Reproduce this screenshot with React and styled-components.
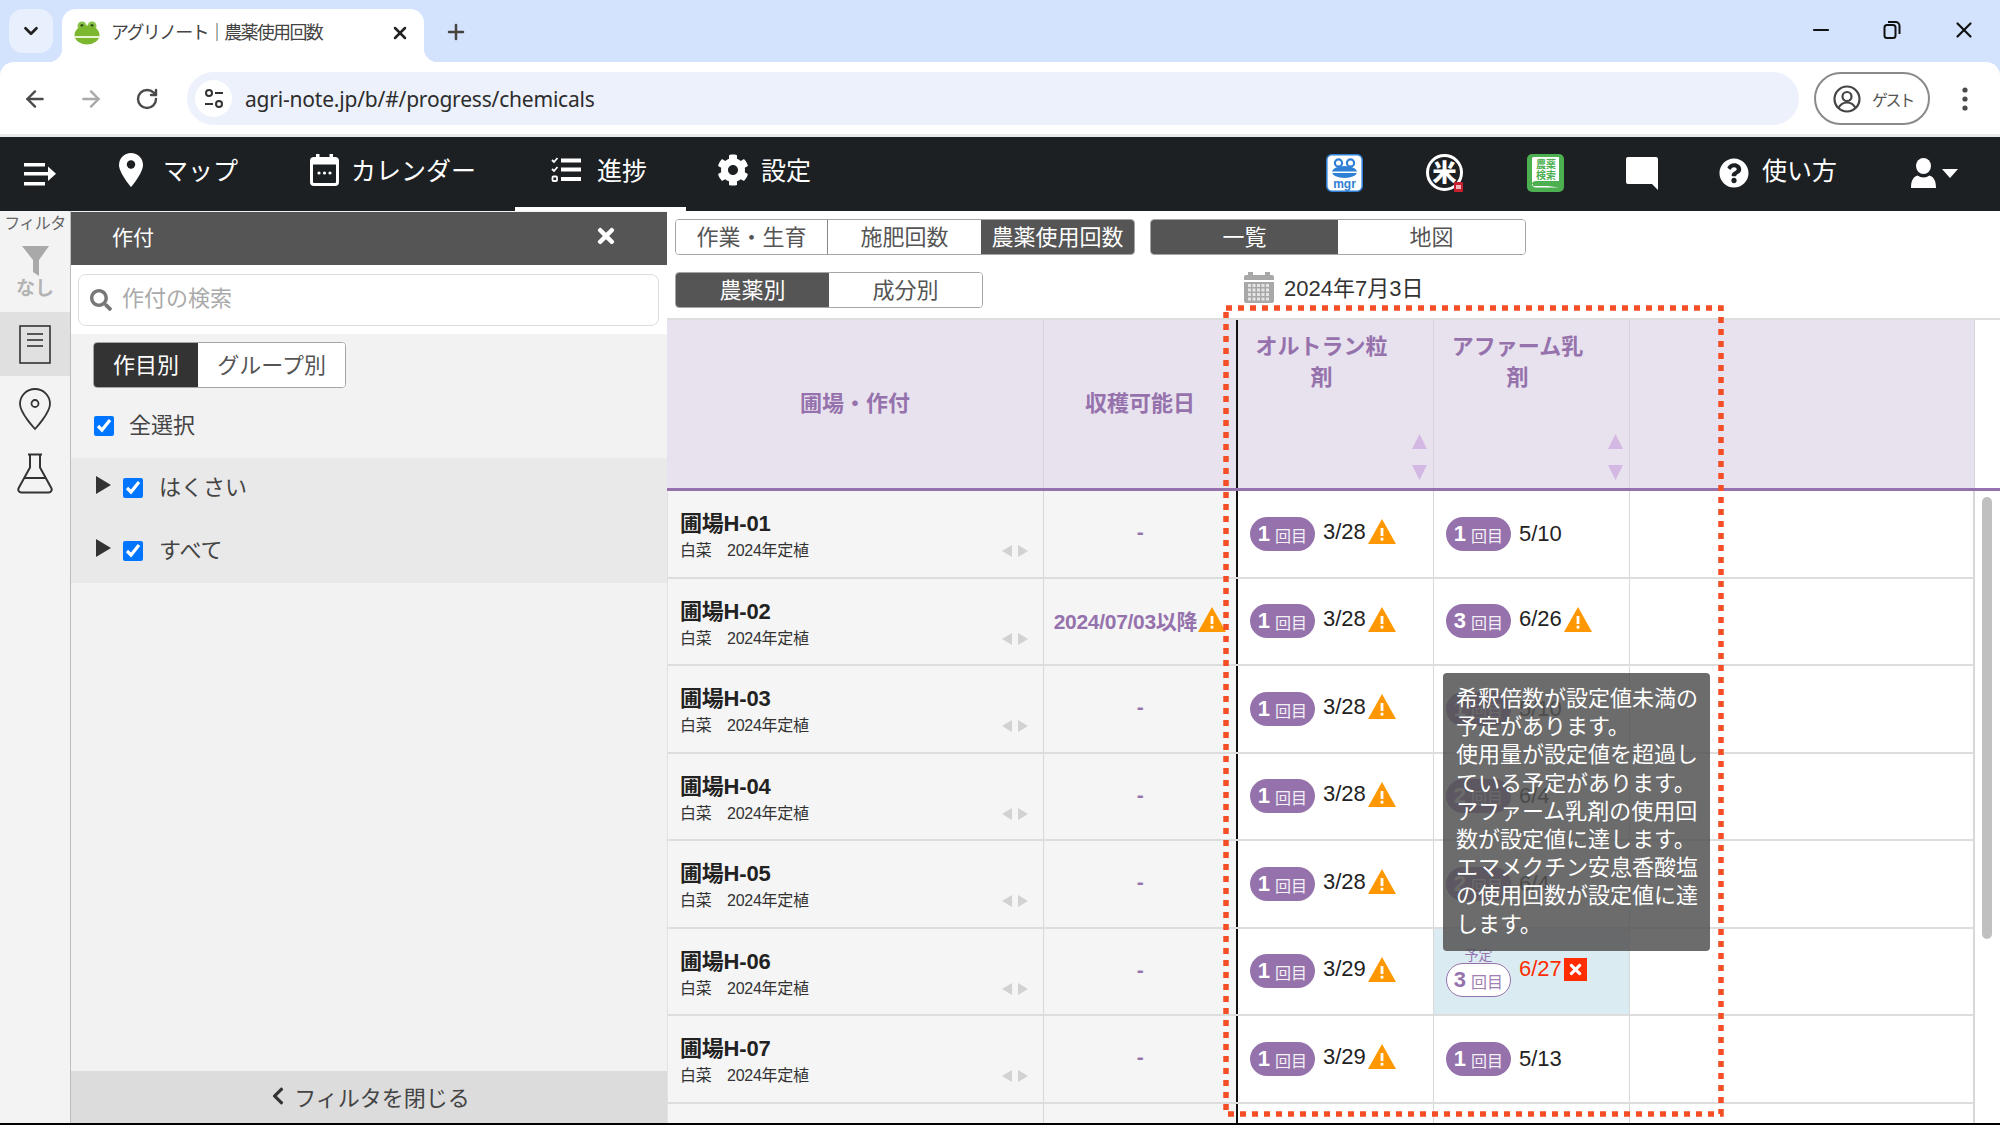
import React from "react";
import styled, { createGlobalStyle } from "styled-components";
import { ArrowLeft, ArrowRight, ChevronDown, Minus, Plus, RotateCw, X } from "lucide-react";
import { FaChevronLeft, FaCog, FaQuestionCircle, FaSearch, FaTimes } from "react-icons/fa";

const GlobalStyle = createGlobalStyle`
  html, body {
    margin: 0;
    padding: 0;
    overflow: hidden;
    background: #000;
    font-family: "Liberation Sans", "Noto Sans CJK JP", sans-serif;
  }
  * {
    box-sizing: border-box;
  }
`;

const COLUMNS = "377px 194px 196px 196px 1fr";
const PURPLE = "#9672ad";

const Page = styled.div`
  width: 2000px;
  height: 1125px;
  display: flex;
  flex-direction: column;
  position: relative;
  overflow: hidden;
  background: #000;
`;

/* browser chrome */
const Chrome = styled.div`
  background: #d3e3fd;
  flex: none;
`;

const TabStrip = styled.div`
  height: 62px;
  display: flex;
  align-items: flex-end;
  padding-left: 9px;
  color: #222;
`;

const TabListButton = styled.div`
  width: 44px;
  height: 44px;
  margin: 0 9px 9px 0;
  border-radius: 14px;
  background: #e8f0fe;
  display: flex;
  align-items: center;
  justify-content: center;
`;

const Tab = styled.div`
  width: 362px;
  height: 53px;
  background: #fff;
  border-radius: 14px 14px 0 0;
  display: flex;
  align-items: center;
  padding: 0 14px 6px 12px;
  position: relative;

  &::before,
  &::after {
    content: "";
    position: absolute;
    bottom: 0;
    width: 14px;
    height: 14px;
  }
  &::before {
    left: -14px;
    background: radial-gradient(circle at 0 0, transparent 14px, #fff 14.5px);
  }
  &::after {
    right: -14px;
    background: radial-gradient(circle at 100% 0, transparent 14px, #fff 14.5px);
  }
`;

const TabTitle = styled.span`
  font-size: 18px;
  color: #444;
  margin-left: 11px;
  flex: 1;
  white-space: nowrap;
  letter-spacing: -1.7px;
  padding-bottom: 3px;
`;

const NewTab = styled.div`
  margin: 0 0 18px 20px;
  display: flex;
`;

const WindowControls = styled.div`
  margin-left: auto;
  display: flex;
  align-items: center;
  align-self: flex-start;
  padding-top: 17px;
  padding-right: 23px;
  gap: 50px;
  color: #111;
`;

const BrowserBar = styled.div`
  height: 75px;
  background: #fff;
  border-radius: 14px 14px 0 0;
  border-bottom: 3px solid #e9e9e9;
  display: flex;
  align-items: flex-start;
  padding: 10px 0 0 7px;
`;

const NavButton = styled.div`
  width: 56px;
  height: 53px;
  display: flex;
  align-items: center;
  justify-content: center;
  color: ${(p) => (p.$disabled ? "#a9a9a9" : "#4a4a4a")};
`;

const AddressBar = styled.div`
  width: 1612px;
  height: 53px;
  margin-left: 12px;
  border-radius: 27px;
  background: #ecf1fb;
  display: flex;
  align-items: center;
  padding-left: 8px;
`;

const SiteButton = styled.div`
  width: 37px;
  height: 37px;
  border-radius: 50%;
  background: #fff;
  display: flex;
  align-items: center;
  justify-content: center;
`;

const Url = styled.span`
  font-family: "Noto Sans", sans-serif;
  font-size: 21px;
  color: #2c2c2c;
  margin-left: 13px;
  letter-spacing: -0.2px;
`;

const GuestButton = styled.div`
  width: 116px;
  height: 53px;
  margin-left: 15px;
  border: 2px solid #8a8a8a;
  border-radius: 27px;
  display: flex;
  align-items: center;
  padding-left: 17px;
  gap: 11px;
  font-size: 16px;
  letter-spacing: -2.4px;
  color: #555;
`;

const Kebab = styled.div`
  margin-left: 25px;
  width: 20px;
  height: 53px;
  display: flex;
  align-items: center;
  justify-content: center;
`;

/* app header */
const AppHeader = styled.header`
  height: 74px;
  flex: none;
  background: #1c2023;
  display: flex;
  align-items: stretch;
  color: #fff;
  padding-left: 24px;
  font-size: 25px;
`;

const MenuToggle = styled.div`
  display: flex;
  align-items: center;
  margin-right: 27px;
`;

const NavItem = styled.div`
  display: flex;
  align-items: center;
  padding: 0 ${(p) => (p.$active ? 39 : 36)}px 4px 36px;
  gap: ${(p) => p.$gap || 16}px;
  margin-left: ${(p) => p.$shift || 0}px;
  white-space: nowrap;
  border-bottom: 4px solid ${(p) => (p.$active ? "#fff" : "transparent")};

  & > span {
    padding-bottom: 2px;
  }
`;

const HeaderRight = styled.div`
  margin-left: auto;
  display: flex;
  align-items: center;
  gap: 63px;
  padding-right: 42px;
  padding-bottom: 2px;
`;

const HelpLink = styled.div`
  display: flex;
  align-items: center;
  gap: 13px;
  margin-left: -2px;
  margin-right: 11px;

  & > span {
    padding-bottom: 8px;
  }
`;

const UserMenu = styled.div`
  display: flex;
  align-items: center;
  gap: 6px;
`;

/* main area */
const Main = styled.div`
  height: 912px;
  flex: none;
  display: flex;
  background: #fff;
`;

const Rail = styled.aside`
  width: 71px;
  flex: none;
  background: #f3f3f3;
  border-right: 1px solid #bdbdbd;
  display: flex;
  flex-direction: column;
  align-items: stretch;
`;

const RailLabel = styled.div`
  font-size: 16px;
  line-height: 26px;
  color: #666;
  text-align: center;
  height: 35px;
  white-space: nowrap;
  letter-spacing: -0.5px;
`;

const RailFilter = styled.div`
  height: 66px;
  display: flex;
  flex-direction: column;
  align-items: center;
  color: #b4b4b4;
  font-size: 19px;
  line-height: 26px;
  font-weight: bold;
`;

const RailItem = styled.div`
  height: ${(p) => p.$h}px;
  display: flex;
  align-items: center;
  justify-content: center;
  padding-bottom: ${(p) => p.$lift || 0}px;
  background: ${(p) => (p.$active ? "#e0e0e0" : "transparent")};
`;

const FilterPanel = styled.section`
  width: 596px;
  flex: none;
  display: flex;
  flex-direction: column;
  background: #f2f2f2;
`;

const PanelHeader = styled.div`
  height: 53px;
  margin-top: 1px;
  background: #555;
  color: #fff;
  font-size: 21px;
  display: flex;
  align-items: center;
  justify-content: space-between;
  padding: 0 49px 5px 41px;
`;

const SearchArea = styled.div`
  height: 69px;
  background: #fff;
  padding: 9px 8px 8px 7px;
`;

const SearchBox = styled.div`
  height: 52px;
  border: 1.5px solid #ddd;
  border-radius: 8px;
  display: flex;
  align-items: center;
  padding-left: 11px;
  gap: 10px;
  font-size: 22px;
  color: #aaa;

  & > span {
    padding-bottom: 9px;
  }
`;

const PanelToggle = styled.div`
  margin: 8px 0 0 22px;
`;

const SelectAll = styled.label`
  display: flex;
  align-items: center;
  height: 70px;
  padding: 0 0 1px 23px;
  gap: 15px;
  font-size: 22px;
  color: #444;
`;

const CheckBox = styled.input.attrs({ type: "checkbox", readOnly: true })`
  width: 20px;
  height: 20px;
  margin: 6px 0 0;
  accent-color: #0075ff;
`;

const CropGroup = styled.div`
  background: #e9e9e9;
`;

const CropRow = styled.div`
  height: 62.5px;
  display: flex;
  align-items: center;
  padding: 0 0 8px 25px;
  font-size: 22px;
  color: #444;
`;

const Caret = styled.span`
  width: 0;
  height: 0;
  border-left: 15px solid #333;
  border-top: 9px solid transparent;
  border-bottom: 9px solid transparent;
  margin-right: 12px;
`;

const CropName = styled.span`
  margin-left: 16px;
`;

const PanelFooter = styled.div`
  margin-top: auto;
  height: 52px;
  background: #dcdcdc;
  display: flex;
  align-items: center;
  justify-content: center;
  gap: 6px;
  font-size: 22px;
  color: #444;
  padding-bottom: 2px;
`;

const Content = styled.main`
  flex: 1;
  min-width: 0;
  display: flex;
  flex-direction: column;
`;

const Controls = styled.div`
  height: 107px;
  flex: none;
  padding: 8px 0 0 8px;
`;

const ControlRow = styled.div`
  height: 36px;
  display: flex;
  align-items: center;
  margin-bottom: 17px;
`;

const SegGroup = styled.div`
  display: flex;
  height: ${(p) => p.$h || 36}px;
  border: 1.5px solid #a5a5a5;
  border-radius: 4px;
  overflow: hidden;
  margin-left: ${(p) => p.$ml || 0}px;
  background: #fff;
`;

const Seg = styled.div`
  width: ${(p) => p.$w}px;
  display: flex;
  align-items: center;
  justify-content: center;
  font-size: 22px;
  white-space: nowrap;
  padding-bottom: 4px;
  background: ${(p) => (p.$active ? p.$dark || "#555" : "#fff")};
  color: ${(p) => (p.$active ? "#fff" : "#555")};
  border-right: ${(p) => (p.$line ? "1px solid #888" : "none")};
`;

const DateLabel = styled.div`
  height: 36px;
  display: flex;
  align-items: center;
  gap: 10px;
  margin-left: 261px;
  padding-bottom: 6px;
  font-size: 22px;
  color: #333;

  & > span {
    padding-bottom: 3px;
  }
`;

const Table = styled.div`
  flex: 1;
  min-height: 0;
  position: relative;
  overflow: hidden;
  border-top: 2px solid #dedede;
  padding-right: 25px;
`;

const HeadRow = styled.div`
  height: 171px;
  display: grid;
  grid-template-columns: ${COLUMNS};
  background: #e8e2ee;
  border-bottom: 3px solid ${PURPLE};
  margin-right: -25px;
  padding-right: 25px;
  background-clip: content-box;
  color: ${PURPLE};
  font-size: 22px;
  font-weight: bold;
`;

const HeadCell = styled.div`
  display: flex;
  align-items: center;
  justify-content: center;
  border-right: ${(p) => (p.$fixed ? "2px solid #111" : "1px solid #d6d3da")};
  padding-bottom: 7px;
`;

const DrugHead = styled.div`
  display: flex;
  border-right: 1px solid #d6d3da;
`;

const DrugName = styled.div`
  flex: 1;
  text-align: center;
  line-height: 31px;
  padding-top: 11px;
`;

const SortArrows = styled.div`
  width: 28px;
  padding: 0 6px 8px 7px;
  display: flex;
  flex-direction: column;
  justify-content: flex-end;
  gap: 16px;
`;

const Row = styled.div`
  height: 87.5px;
  display: grid;
  grid-template-columns: ${COLUMNS};
  border-bottom: 2px solid #ddd;
  border-right: 1px solid #d8d8d8;
`;

const FieldCell = styled.div`
  background: #f5f5f5;
  border-right: 1px solid #d8d8d8;
  padding: 19px 15px 0 12px;
  border-left: 1px solid #e2e2e2;
`;

const FieldName = styled.div`
  font-size: 22px;
  font-weight: bold;
  line-height: 28px;
  color: #222;
  letter-spacing: -0.2px;
`;

const FieldSub = styled.div`
  display: flex;
  align-items: center;
  justify-content: space-between;
  font-size: 16px;
  color: #333;
  line-height: 26px;
  letter-spacing: -0.3px;
`;

const SubArrows = styled.div`
  display: flex;
  gap: 6px;
`;

const HarvestCell = styled.div`
  background: #f5f5f5;
  border-right: 2px solid #111;
  display: flex;
  align-items: center;
  justify-content: center;
  gap: 1px;
  padding-bottom: 3px;
  color: ${PURPLE};
  font-size: 21px;
  font-weight: bold;
  white-space: nowrap;
  letter-spacing: -0.3px;
`;

const UseCell = styled.div`
  display: flex;
  align-items: center;
  padding-left: 12px;
  border-right: 1px solid #d8d8d8;
  background: ${(p) => (p.$planned ? "#daecf2" : "transparent")};
`;

const Badge = styled.div`
  width: 65px;
  height: 34px;
  flex: none;
  border-radius: 17px;
  display: flex;
  align-items: center;
  justify-content: center;
  gap: 5px;
  background: ${(p) => (p.$planned ? "#fff" : PURPLE)};
  border: ${(p) => (p.$planned ? `1.5px solid ${PURPLE}` : "none")};
  color: ${(p) => (p.$planned ? PURPLE : "#fff")};
`;

const BadgeCount = styled.span`
  font-size: 22px;
  font-weight: bold;
`;

const BadgeUnit = styled.span`
  font-size: 16px;
  margin-top: 2px;
  opacity: 0.9;
`;

const Planned = styled.div`
  display: flex;
  flex-direction: column;
  align-items: center;
  margin-top: 2px;
`;

const PlannedLabel = styled.div`
  font-size: 14px;
  line-height: 16px;
  color: ${PURPLE};
`;

const UseDate = styled.span`
  font-size: 22px;
  color: ${(p) => (p.$error ? "#ff2d00" : "#222")};
  margin: 0 2px ${(p) => (p.$flat ? 0 : 4)}px 8px;
`;

const ErrorMark = styled.span`
  width: 23px;
  height: 23px;
  margin-bottom: 4px;
  background: #ff2d00;
  color: #fff;
  display: flex;
  align-items: center;
  justify-content: center;
`;

const Tooltip = styled.div`
  position: absolute;
  left: 776px;
  top: 353px;
  width: 267px;
  height: 278px;
  padding: 12px 0 0 13px;
  background: rgba(82, 82, 82, 0.85);
  border-radius: 4px;
  color: #fff;
  font-size: 22px;
  line-height: 28.2px;
  white-space: nowrap;
`;

const TooltipLine = styled.div`
  display: block;
`;

const ScrollThumb = styled.div`
  position: absolute;
  left: 1315px;
  top: 177px;
  width: 10px;
  height: 442px;
  border-radius: 5px;
  background: #c0c0c0;
`;

const Annotation = styled.svg`
  position: absolute;
  left: 1223px;
  top: 305px;
  pointer-events: none;
`;

const WarnInline = styled.span`
  display: flex;
  margin-bottom: 4px;
`;

const FrogIcon = () => (
  <svg width="26" height="26" viewBox="0 0 26 26">
    <circle cx="8" cy="6" r="4.500" fill="#8bc34a" />
    <circle cx="18" cy="6" r="4.500" fill="#8bc34a" />
    <circle cx="8" cy="5.500" r="1.600" fill="#2d4d16" />
    <circle cx="18" cy="5.500" r="1.600" fill="#2d4d16" />
    <ellipse cx="13" cy="15" rx="12.500" ry="9.500" fill="#7cb82f" />
    <rect x="0" y="16" width="26" height="2" fill="#e8f3d6" />
  </svg>
);

const RestoreIcon = () => (
  <svg width="18" height="20" viewBox="0 0 18 20" fill="none" stroke="#111" strokeWidth="2">
    <rect x="1.500" y="5" width="11" height="13" rx="2.500" />
    <path d="M5 2h7.500a4 4 0 0 1 4 4v8" />
  </svg>
);

const SiteIcon = () => (
  <svg width="20" height="22" viewBox="0 0 20 22" fill="none" stroke="#333" strokeWidth="2">
    <circle cx="5" cy="5" r="3" />
    <path d="M11 5h8" />
    <path d="M1 16h8" />
    <circle cx="15" cy="16" r="3" />
  </svg>
);

const GuestIcon = () => (
  <svg width="28" height="28" viewBox="0 0 28 28" fill="none" stroke="#444" strokeWidth="2.200">
    <circle cx="14" cy="14" r="12.500" />
    <circle cx="14" cy="11.500" r="4.500" />
    <path d="M5.500 23c2-4 5-5.500 8.500-5.500s6.500 1.500 8.500 5.500" />
  </svg>
);

const DotsIcon = () => (
  <svg width="6" height="26" viewBox="0 0 6 26" fill="#4a4a4a">
    <circle cx="3" cy="4" r="2.600" />
    <circle cx="3" cy="13" r="2.600" />
    <circle cx="3" cy="22" r="2.600" />
  </svg>
);

const MenuIcon = () => (
  <svg width="32" height="24" viewBox="0 0 32 24" fill="#fff">
    <rect x="0" y="1" width="21" height="3.500" />
    <rect x="0" y="10" width="25" height="3.500" />
    <path d="M24 4.500l8 7.200-8 7.300z" />
    <rect x="0" y="20" width="21" height="3.500" />
  </svg>
);

const PinIcon = () => (
  <svg width="24" height="34" viewBox="0 0 24 34">
    <path d="M12 0C5.400 0 0 5.300 0 12c0 8 12 22 12 22s12-14 12-22C24 5.300 18.600 0 12 0z" fill="#fff" />
    <circle cx="12" cy="11.500" r="4.200" fill="#1c2023" />
  </svg>
);

const CalendarIcon = () => (
  <svg width="29" height="32" viewBox="0 0 29 32" fill="none">
    <rect x="1.500" y="4.500" width="26" height="26" rx="2.500" stroke="#fff" strokeWidth="3" />
    <rect x="1.500" y="4.500" width="26" height="6" fill="#fff" />
    <rect x="6" y="0" width="3.500" height="7" fill="#fff" />
    <rect x="19.500" y="0" width="3.500" height="7" fill="#fff" />
    <circle cx="9" cy="19" r="1.600" fill="#fff" />
    <circle cx="14.500" cy="19" r="1.600" fill="#fff" />
    <circle cx="20" cy="19" r="1.600" fill="#fff" />
  </svg>
);

const ChecklistIcon = () => (
  <svg width="30" height="26" viewBox="0 0 30 26" fill="none" stroke="#fff">
    <path d="M1 3l2 2 3.500-4M1 12l2 2 3.500-4" strokeWidth="1.800" />
    <rect x="1.500" y="19.500" width="4.500" height="4.500" rx="1" strokeWidth="1.800" />
    <path d="M10 3.500h20M10 12.500h20M10 22h20" strokeWidth="4" />
  </svg>
);

const MgrLogo = () => (
  <svg width="37" height="38" viewBox="0 0 37 38">
    <rect x="0.800" y="0.800" width="35.400" height="36.400" rx="5" fill="#fff" stroke="#2f7fd6" strokeWidth="1.600" />
    <circle cx="12.500" cy="9" r="3.600" fill="none" stroke="#2f7fd6" strokeWidth="2.200" />
    <circle cx="24.500" cy="9" r="3.600" fill="none" stroke="#2f7fd6" strokeWidth="2.200" />
    <ellipse cx="18.500" cy="18" rx="12.500" ry="6" fill="#2f7fd6" />
    <rect x="5.500" y="17.500" width="26" height="1.500" fill="#fff" />
    <text x="18.500" y="33.500" fontSize="12" fontWeight="bold" fill="#2f7fd6" textAnchor="middle" fontFamily="Liberation Sans, sans-serif">mgr</text>
  </svg>
);

const RiceLogo = () => (
  <svg width="38" height="38" viewBox="0 0 38 38">
    <circle cx="18.500" cy="18.500" r="17" fill="none" stroke="#fff" strokeWidth="3" />
    <text x="18.500" y="27" fontSize="24" fontWeight="900" fill="#fff" textAnchor="middle" fontFamily="Noto Sans CJK JP, sans-serif">米</text>
    <rect x="28" y="28" width="9" height="10" rx="1" fill="#c8202f" />
    <rect x="30" y="31" width="5" height="4" fill="#f2b5ba" />
  </svg>
);

const BookLogo = () => (
  <svg width="37" height="38" viewBox="0 0 37 38">
    <rect width="37" height="38" rx="5" fill="#4caf50" />
    <path d="M5 30V4.500a1.500 1.500 0 0 1 1.500-1.500H32v24H9c-2.200 0-4 1.200-4 3 0 2 1.800 3.500 4 3.500h23" fill="#fff" />
    <rect x="6" y="29" width="27" height="3" fill="#4caf50" />
    <text x="19" y="14" fontSize="10" fontWeight="bold" fill="#4caf50" textAnchor="middle" fontFamily="Noto Sans CJK JP, sans-serif">農薬</text>
    <text x="19" y="25" fontSize="10" fontWeight="bold" fill="#4caf50" textAnchor="middle" fontFamily="Noto Sans CJK JP, sans-serif">検索</text>
  </svg>
);

const ChatIcon = () => (
  <svg width="32" height="33" viewBox="0 0 32 33" style={{ marginLeft: -1 }}>
    <path d="M2 0h28a2 2 0 0 1 2 2v31l-6-6H2a2 2 0 0 1-2-2V2a2 2 0 0 1 2-2z" fill="#fff" />
  </svg>
);

const UserIcon = () => (
  <svg width="25" height="30" viewBox="0 0 25 30" fill="#fff">
    <ellipse cx="12.500" cy="8" rx="7.500" ry="8" />
    <path d="M0 30c0-7 2-11 6.500-12.500 3.500 2.500 8.500 2.500 12 0C23 19 25 23 25 30z" />
  </svg>
);

const UserCaret = () => (
  <svg width="16" height="9" viewBox="0 0 16 9" fill="#fff">
    <path d="M0 0h16l-8 9z" />
  </svg>
);

const FunnelIcon = () => (
  <svg width="27" height="30" viewBox="0 0 27 30" fill="#a9a9a9">
    <path d="M0 0h27L17 14v16l-6-4V14z" />
  </svg>
);

const DocIcon = () => (
  <svg width="32" height="39" viewBox="0 0 32 39" fill="none" stroke="#333" strokeWidth="1.600">
    <rect x="1" y="1" width="30" height="37" />
    <path d="M8 9h16M8 15h16M8 21h16" stroke="#555" strokeWidth="2" />
  </svg>
);

const PinOutline = () => (
  <svg width="32" height="42" viewBox="0 0 32 42" fill="none" stroke="#333" strokeWidth="1.800">
    <path d="M16 1C7.700 1 1 7.500 1 16c0 9 15 25 15 25s15-16 15-25C31 7.500 24.300 1 16 1z" />
    <circle cx="16" cy="15.500" r="3.500" />
  </svg>
);

const FlaskIcon = () => (
  <svg width="36" height="41" viewBox="0 0 36 41" fill="none" stroke="#333" strokeWidth="2">
    <path d="M11 1.500h14M13 1.500v13L1.700 35a3 3 0 0 0 2.800 4.500h27a3 3 0 0 0 2.800-4.500L23 14.500v-13" />
    <path d="M7.500 25h21" />
  </svg>
);

const GrayCalendar = () => (
  <svg width="30" height="31" viewBox="0 0 30 31">
    <rect y="3" width="30" height="28" rx="2" fill="#a8a8a8" />
    <rect x="4" y="0" width="5" height="6" fill="#a8a8a8" />
    <rect x="21" y="0" width="5" height="6" fill="#a8a8a8" />
    <rect y="8" width="30" height="2" fill="#fff" />
    {[12, 16.5, 21, 25.5].map((y) =>
      [4, 8.5, 13, 17.5, 22].map((x) => (
        <rect key={`${x}-${y}`} x={x} y={y} width="3" height="3" fill="#e4e4e4" />
      ))
    )}
  </svg>
);

const SortArrow = ({ down }) => (
  <svg width="15" height="15" viewBox="0 0 15 15" fill="#d4b8e4">
    <path d={down ? "M0 0h15L7.500 15z" : "M0 15h15L7.500 0z"} />
  </svg>
);

const SideArrow = ({ right }) => (
  <svg width="10" height="12" viewBox="0 0 10 12" fill="#d2d2d2">
    <path d={right ? "M0 0l10 6-10 6z" : "M10 0L0 6l10 6z"} />
  </svg>
);

const WarnIcon = () => (
  <svg width="28" height="25" viewBox="0 0 28 25" style={{ flex: "none" }}>
    <path d="M14 0l14 25H0z" fill="#ff9800" />
    <rect x="12.600" y="9" width="2.800" height="8" fill="#fff" />
    <rect x="12.600" y="18.800" width="2.800" height="2.800" fill="#fff" />
  </svg>
);

const COUNT_ROWS = [
  { first: "3/28", count: 1, date: "5/10" },
  { harvest: "2024/07/03以降", first: "3/28", count: 3, date: "6/26", warn: true },
  { first: "3/28", count: 1, date: "5/10" },
  { first: "3/28", count: 2, date: "6/4" },
  { first: "3/28", count: 2, date: "6/4" },
  { first: "3/29", count: 3, date: "6/27", planned: true },
  { first: "3/29", count: 1, date: "5/13" },
];

const TOOLTIP_LINES = [
  "希釈倍数が設定値未満の",
  "予定があります。",
  "使用量が設定値を超過し",
  "ている予定があります。",
  "アファーム乳剤の使用回",
  "数が設定値に達します。",
  "エマメクチン安息香酸塩",
  "の使用回数が設定値に達",
  "します。",
];

const CountBadge = ({ count, planned }) => (
  <Badge $planned={planned}>
    <BadgeCount>{count}</BadgeCount>
    <BadgeUnit>回目</BadgeUnit>
  </Badge>
);

const App = () => {
  return (
    <Page>
      <GlobalStyle />
      <Chrome>
        <TabStrip>
          <TabListButton>
            <ChevronDown size={22} strokeWidth={3} />
          </TabListButton>
          <Tab>
            <FrogIcon />
            <TabTitle>アグリノート｜農薬使用回数</TabTitle>
            <X size={20} strokeWidth={3} />
          </Tab>
          <NewTab>
            <Plus size={24} strokeWidth={2.5} color="#444" />
          </NewTab>
          <WindowControls>
            <Minus size={24} strokeWidth={2.2} />
            <RestoreIcon />
            <X size={26} strokeWidth={2} />
          </WindowControls>
        </TabStrip>
        <BrowserBar>
          <NavButton>
            <ArrowLeft size={26} strokeWidth={2.2} />
          </NavButton>
          <NavButton $disabled>
            <ArrowRight size={26} strokeWidth={2.2} />
          </NavButton>
          <NavButton>
            <RotateCw size={24} strokeWidth={2.4} />
          </NavButton>
          <AddressBar>
            <SiteButton>
              <SiteIcon />
            </SiteButton>
            <Url>agri-note.jp/b/#/progress/chemicals</Url>
          </AddressBar>
          <GuestButton>
            <GuestIcon />
            <span>ゲスト</span>
          </GuestButton>
          <Kebab>
            <DotsIcon />
          </Kebab>
        </BrowserBar>
      </Chrome>

      <AppHeader>
        <MenuToggle>
          <MenuIcon />
        </MenuToggle>
        <NavItem $gap={20}>
          <PinIcon />
          <span>マップ</span>
        </NavItem>
        <NavItem $gap={12}>
          <CalendarIcon />
          <span>カレンダー</span>
        </NavItem>
        <NavItem $active $shift={3}>
          <ChecklistIcon />
          <span>進捗</span>
        </NavItem>
        <NavItem $gap={12} $shift={-5}>
          <FaCog size={32} />
          <span>設定</span>
        </NavItem>
        <HeaderRight>
          <MgrLogo />
          <RiceLogo />
          <BookLogo />
          <ChatIcon />
          <HelpLink>
            <FaQuestionCircle size={30} />
            <span>使い方</span>
          </HelpLink>
          <UserMenu>
            <UserIcon />
            <UserCaret />
          </UserMenu>
        </HeaderRight>
      </AppHeader>

      <Main>
        <Rail>
          <RailLabel>フィルタ</RailLabel>
          <RailFilter>
            <FunnelIcon />
            <span>なし</span>
          </RailFilter>
          <RailItem $active $h={64}>
            <DocIcon />
          </RailItem>
          <RailItem $h={66}>
            <PinOutline />
          </RailItem>
          <RailItem $h={66} $lift={3}>
            <FlaskIcon />
          </RailItem>
        </Rail>

        <FilterPanel>
          <PanelHeader>
            <span>作付</span>
            <FaTimes size={24} />
          </PanelHeader>
          <SearchArea>
            <SearchBox>
              <FaSearch size={22} color="#777" />
              <span>作付の検索</span>
            </SearchBox>
          </SearchArea>
          <PanelToggle>
            <SegGroup $h={46} style={{ width: 253 }}>
              <Seg $w={105} $active $dark="#333">作目別</Seg>
              <Seg $w={148}>グループ別</Seg>
            </SegGroup>
          </PanelToggle>
          <SelectAll>
            <CheckBox checked />
            <span>全選択</span>
          </SelectAll>
          <CropGroup>
            <CropRow>
              <Caret />
              <CheckBox checked />
              <CropName>はくさい</CropName>
            </CropRow>
            <CropRow>
              <Caret />
              <CheckBox checked />
              <CropName>すべて</CropName>
            </CropRow>
          </CropGroup>
          <PanelFooter>
            <FaChevronLeft size={20} color="#333" />
            <span>フィルタを閉じる</span>
          </PanelFooter>
        </FilterPanel>

        <Content>
          <Controls>
            <ControlRow>
              <SegGroup>
                <Seg $w={152} $line>作業・生育</Seg>
                <Seg $w={153}>施肥回数</Seg>
                <Seg $w={153} $active>農薬使用回数</Seg>
              </SegGroup>
              <SegGroup $ml={15}>
                <Seg $w={187} $active>一覧</Seg>
                <Seg $w={187}>地図</Seg>
              </SegGroup>
            </ControlRow>
            <ControlRow>
              <SegGroup>
                <Seg $w={153} $active>農薬別</Seg>
                <Seg $w={153}>成分別</Seg>
              </SegGroup>
              <DateLabel>
                <GrayCalendar />
                <span>2024年7月3日</span>
              </DateLabel>
            </ControlRow>
          </Controls>

          <Table>
            <HeadRow>
              <HeadCell>圃場・作付</HeadCell>
              <HeadCell $fixed>収穫可能日</HeadCell>
              <DrugHead>
                <DrugName>
                  オルトラン粒
                  <br />剤
                </DrugName>
                <SortArrows>
                  <SortArrow />
                  <SortArrow down />
                </SortArrows>
              </DrugHead>
              <DrugHead>
                <DrugName>
                  アファーム乳
                  <br />剤
                </DrugName>
                <SortArrows>
                  <SortArrow />
                  <SortArrow down />
                </SortArrows>
              </DrugHead>
              <DrugHead />
            </HeadRow>

            {COUNT_ROWS.map((r, i) => (
              <Row key={i}>
                <FieldCell>
                  <FieldName>圃場H-0{i + 1}</FieldName>
                  <FieldSub>
                    <span>白菜　2024年定植</span>
                    <SubArrows>
                      <SideArrow />
                      <SideArrow right />
                    </SubArrows>
                  </FieldSub>
                </FieldCell>
                <HarvestCell>
                  {r.harvest || "-"}
                  {r.harvest && <WarnIcon />}
                </HarvestCell>
                <UseCell>
                  <CountBadge count={1} />
                  <UseDate>{r.first}</UseDate>
                  <WarnInline>
                    <WarnIcon />
                  </WarnInline>
                </UseCell>
                <UseCell $planned={r.planned}>
                  {r.planned ? (
                    <Planned>
                      <PlannedLabel>予定</PlannedLabel>
                      <CountBadge count={r.count} planned />
                    </Planned>
                  ) : (
                    <CountBadge count={r.count} />
                  )}
                  <UseDate $error={r.planned} $flat={!r.warn && !r.planned}>
                    {r.date}
                  </UseDate>
                  {r.warn && (
                    <WarnInline>
                      <WarnIcon />
                    </WarnInline>
                  )}
                  {r.planned && (
                    <ErrorMark>
                      <FaTimes size={17} />
                    </ErrorMark>
                  )}
                </UseCell>
                <UseCell />
              </Row>
            ))}
            <Row>
              <FieldCell />
              <HarvestCell />
              <UseCell />
              <UseCell />
              <UseCell />
            </Row>

            <Tooltip>
              {TOOLTIP_LINES.map((line) => (
                <TooltipLine key={line}>{line}</TooltipLine>
              ))}
            </Tooltip>
            <ScrollThumb />
          </Table>
        </Content>
      </Main>

      <Annotation width="501" height="812" viewBox="0 0 501 812">
        <rect x="3" y="3" width="495" height="806" fill="none" stroke="#f34e25" strokeWidth="5.500" strokeDasharray="6 6" />
      </Annotation>
    </Page>
  );
};

export default App;
